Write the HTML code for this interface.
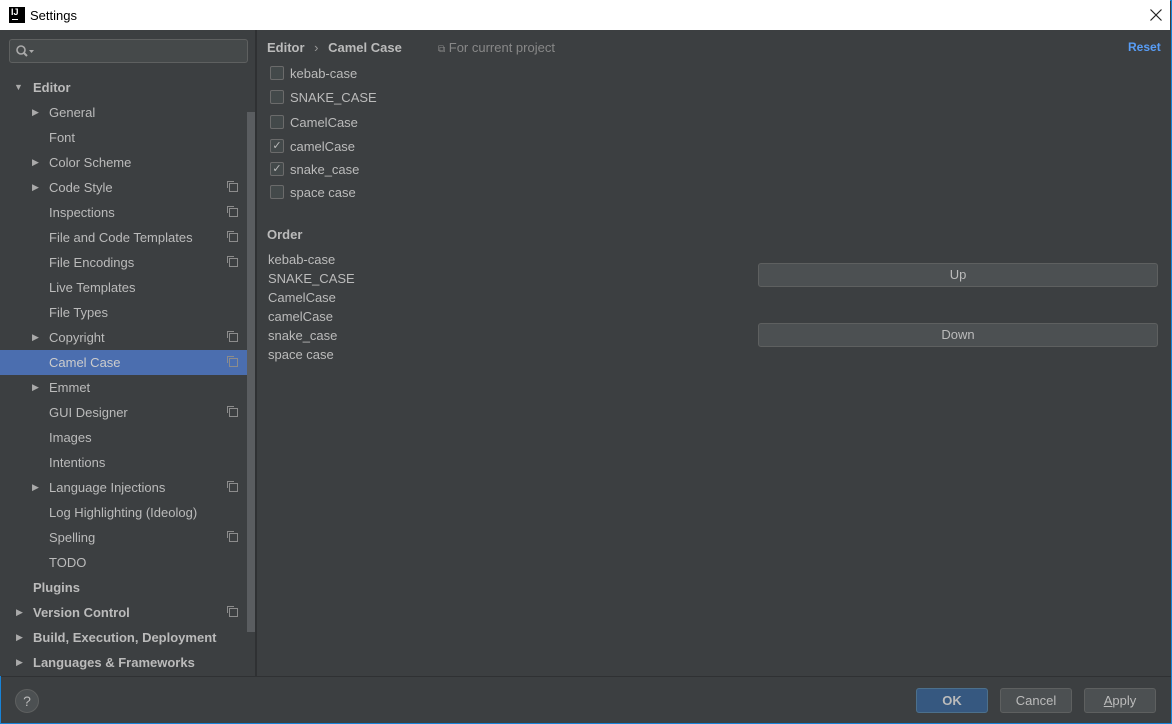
<!DOCTYPE html>
<html><head><style>
*{margin:0;padding:0;box-sizing:border-box}
body{width:1172px;height:724px;overflow:hidden;font-family:"Liberation Sans",sans-serif;font-size:13px;color:#bbbbbb;background:#3c3f41;position:relative}
.win{position:absolute;left:0;top:0;width:1172px;height:724px;border:1px solid #1883d7}
.title{position:absolute;left:0;top:0;width:1170px;height:30px;background:#fff;color:#000;font-size:13px}
.side{position:absolute;left:0;top:30px;width:255px;height:646px;background:#3c3f41}
.sep{position:absolute;left:255px;top:30px;width:2px;height:646px;background:#2f3133}
.row{position:absolute;left:0;width:247px;height:25px;line-height:25px;white-space:nowrap}
.sel{background:#4b6eaf;color:#ccc}
.tri{position:absolute;top:0;font-size:9px;color:#aaa}
.cp{position:absolute;left:229px;top:8px;width:9px;height:9px;border:1px solid #8c8c8c}
.cp:before{content:"";position:absolute;left:-3px;top:-3px;width:6px;height:6px;border-left:1px solid #8c8c8c;border-top:1px solid #8c8c8c}
.cb{position:absolute;left:270px;width:14px;height:14px;border:1px solid #6b6b6b;background:#43494a;border-radius:2px}
.lbl{position:absolute;left:290px}
.btn{position:absolute;border:1px solid #5e6060;background:#4c5052;border-radius:3px;text-align:center;color:#bbb}
</style></head><body>
<div class="win"></div>
<div class="title">
<div style="position:absolute;left:9px;top:7px;width:16px;height:16px;background:#000;color:#fff;font-size:9px;font-weight:bold;line-height:10px;padding-left:2px">IJ<div style="position:absolute;left:3px;top:12px;width:6px;height:1px;background:#fff"></div></div>
<div style="position:absolute;left:30px;top:8px">Settings</div>
<svg style="position:absolute;left:1150px;top:9px" width="12" height="12"><path d="M0.5 0.5L11.5 11.5M11.5 0.5L0.5 11.5" stroke="#222" stroke-width="1.2"/></svg>
</div>
<div class="side">
<div style="position:absolute;left:9px;top:9px;width:239px;height:24px;border:1px solid #5e6060;background:#45494a;border-radius:3px"><svg style="position:absolute;left:5px;top:4px" width="20" height="14"><circle cx="6" cy="6" r="4" stroke="#aaa" stroke-width="1.6" fill="none"/><path d="M9 9L12 12" stroke="#aaa" stroke-width="2"/><path d="M14 6h5l-2.5 3z" fill="#aaa"/></svg></div>
<div style="position:absolute;left:247px;top:82px;width:8px;height:520px;background:#5a5d60"></div>
</div>
<div class="sep"></div>
<div id="tree"></div>
<script>
var items=[["Editor",0,0,0,1],["General",1,1,0],["Font",1,0,0],["Color Scheme",1,1,0],["Code Style",1,1,1],["Inspections",1,0,1],["File and Code Templates",1,0,1],["File Encodings",1,0,1],["Live Templates",1,0,0],["File Types",1,0,0],["Copyright",1,1,1],["Camel Case",1,0,1,0,1],["Emmet",1,1,0],["GUI Designer",1,0,1],["Images",1,0,0],["Intentions",1,0,0],["Language Injections",1,1,1],["Log Highlighting (Ideolog)",1,0,0],["Spelling",1,0,1],["TODO",1,0,0],["Plugins",0,0,0,1],["Version Control",0,1,1,1],["Build, Execution, Deployment",0,1,0,1],["Languages & Frameworks",0,1,0,1]];
var h="";items.forEach(function(it,i){var y=75+i*25;var x=it[1]?49:33;
h+='<div class="row'+(it[5]?' sel':'')+'" style="top:'+y+'px">';
if(it[2])h+='<span class="tri" style="left:'+(x-17)+'px">▶</span>';
if(i==0)h+='<span class="tri" style="left:14px">▼</span>';
h+='<span style="position:absolute;left:'+x+'px;'+(it[4]?'font-weight:bold;':'')+'">'+it[0].replace("&","&amp;")+'</span>';
if(it[3])h+='<span class="cp"></span>';h+='</div>';});
document.getElementById('tree').innerHTML=h;
</script>
<div style="position:absolute;left:267px;top:40px;font-weight:bold">Editor <span style="font-weight:normal;margin:0 6px;color:#999">›</span> Camel Case</div>
<div style="position:absolute;left:438px;top:40px;color:#888"><span style="font-size:10px">⧉</span> For current project</div>
<div style="position:absolute;left:1128px;top:40px;color:#589df6;font-weight:bold;font-size:12px">Reset</div>
<div class="cb" style="top:66px"></div><div class="lbl" style="top:66px">kebab-case</div>
<div class="cb" style="top:90px"></div><div class="lbl" style="top:90px">SNAKE_CASE</div>
<div class="cb" style="top:115px"></div><div class="lbl" style="top:115px">CamelCase</div>
<div class="cb" style="top:139px;color:#bbb;font-size:11px;line-height:12px;text-align:center">✓</div><div class="lbl" style="top:139px">camelCase</div>
<div class="cb" style="top:162px;color:#bbb;font-size:11px;line-height:12px;text-align:center">✓</div><div class="lbl" style="top:162px">snake_case</div>
<div class="cb" style="top:185px"></div><div class="lbl" style="top:185px">space case</div>
<div style="position:absolute;left:267px;top:227px;font-weight:bold">Order</div>
<div style="position:absolute;left:268px;top:250px;line-height:19px">kebab-case<br>SNAKE_CASE<br>CamelCase<br>camelCase<br>snake_case<br>space case</div>
<div class="btn" style="left:758px;top:263px;width:400px;height:24px;line-height:22px">Up</div>
<div class="btn" style="left:758px;top:323px;width:400px;height:24px;line-height:22px">Down</div>
<div style="position:absolute;left:1px;top:676px;width:1170px;height:1px;background:#2f3133"></div>
<div style="position:absolute;left:15px;top:689px;width:24px;height:24px;border-radius:50%;border:1px solid #5e6060;background:#4c5052;text-align:center;line-height:22px;font-size:14px">?</div>
<div class="btn" style="left:916px;top:688px;width:72px;height:25px;line-height:23px;background:#365880;border-color:#4c708c;font-weight:bold">OK</div>
<div class="btn" style="left:1000px;top:688px;width:72px;height:25px;line-height:23px">Cancel</div>
<div class="btn" style="left:1084px;top:688px;width:72px;height:25px;line-height:23px"><u>A</u>pply</div>
</body></html>
